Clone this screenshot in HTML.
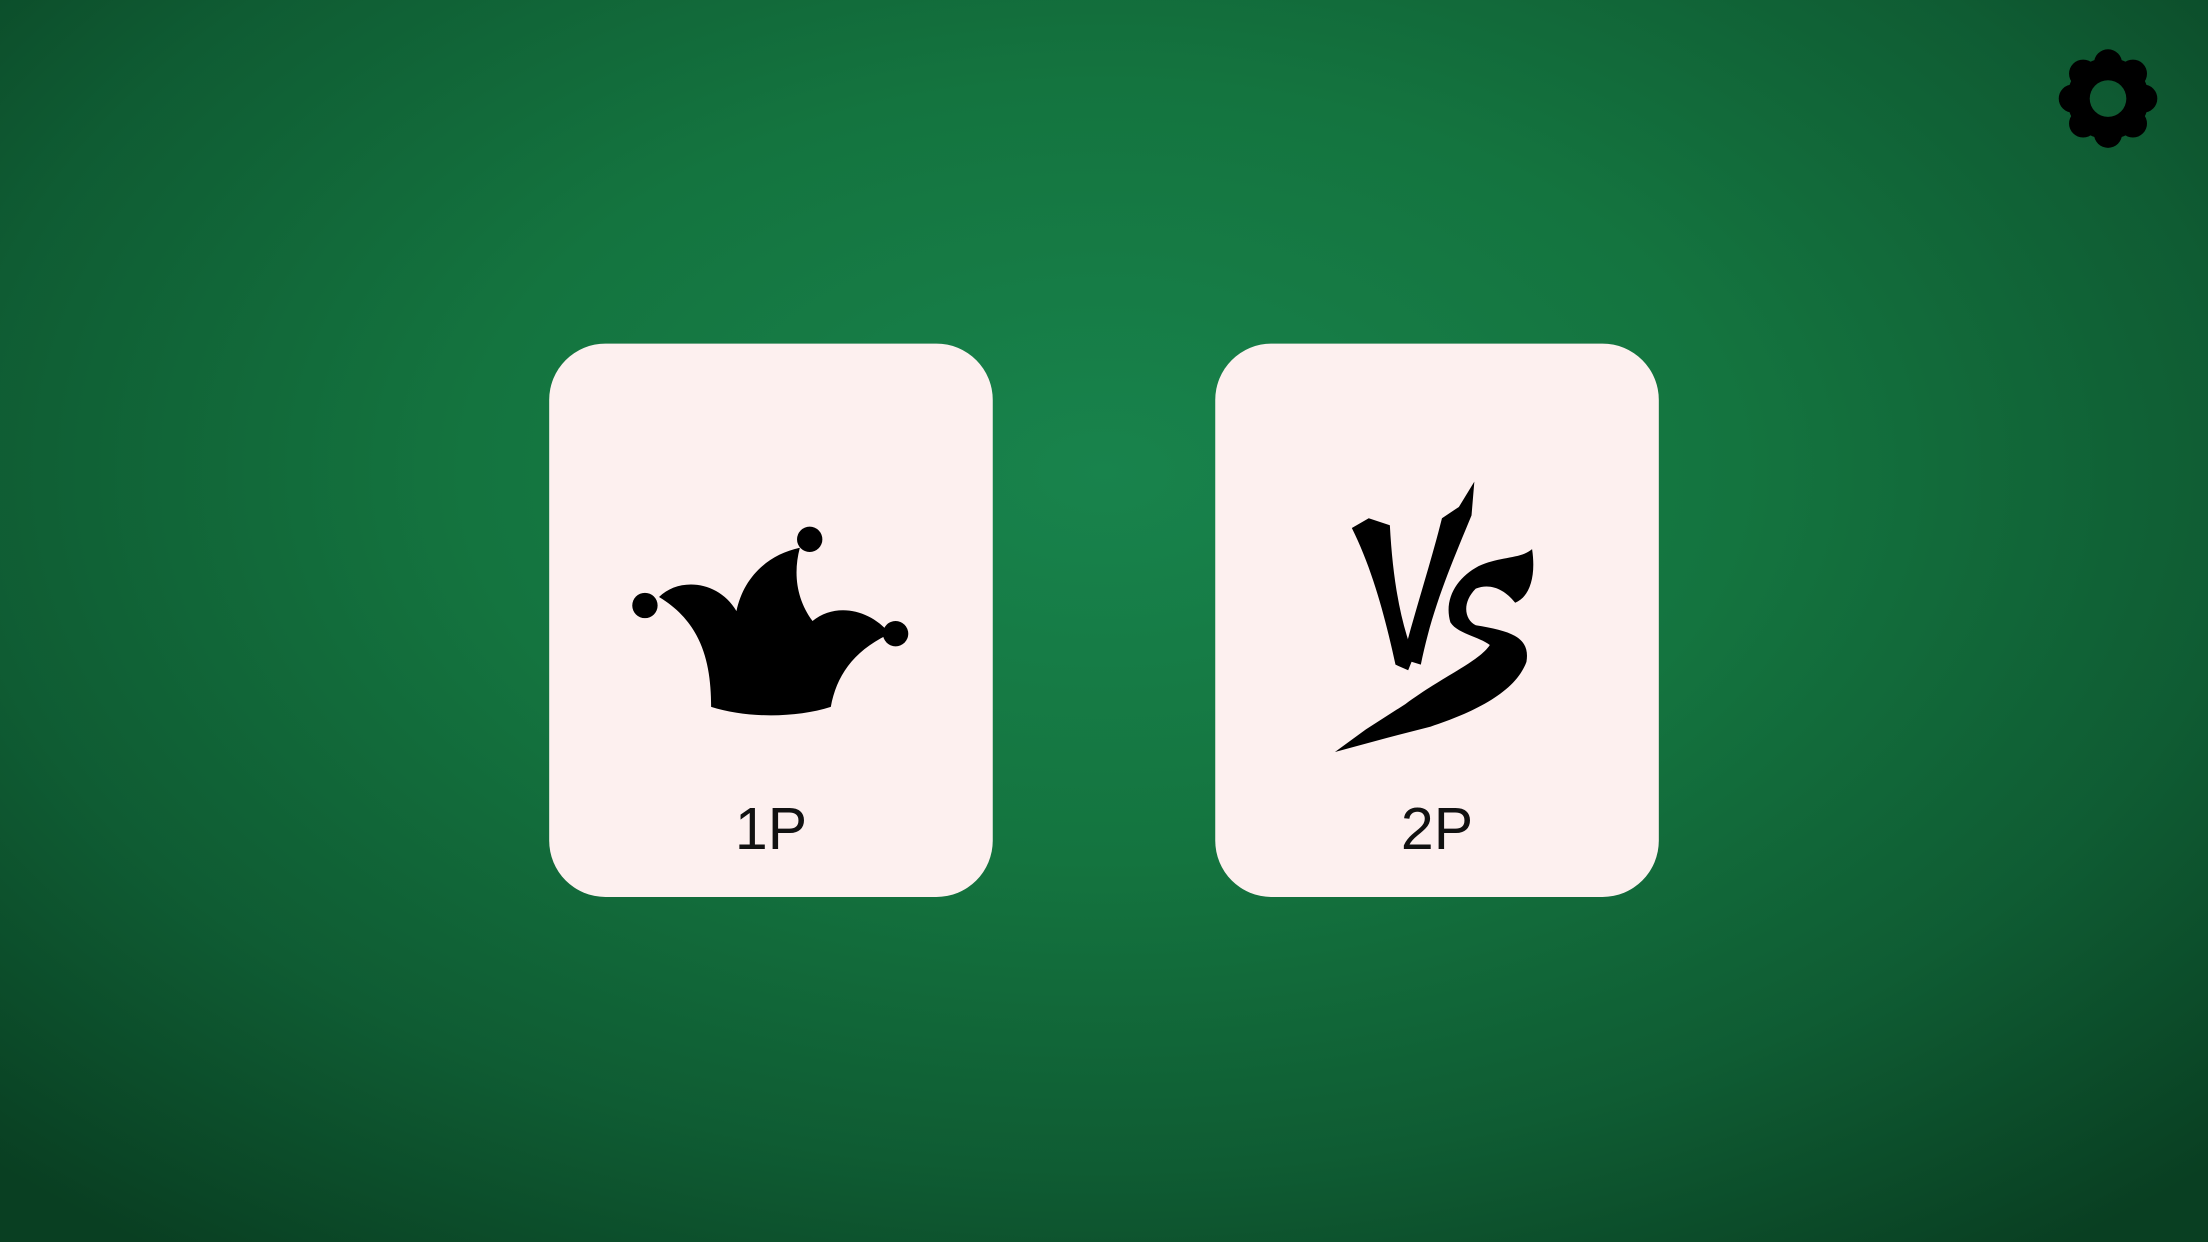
<!DOCTYPE html>
<html><head><meta charset="utf-8"><style>
html,body{margin:0;padding:0}
body{width:2208px;height:1242px;overflow:hidden;position:relative;
background:radial-gradient(ellipse 72% 78% at 50% 38%,#18834c 0%,#14743f 40%,#0f5c33 72%,#093f22 100%);
font-family:"Liberation Sans",sans-serif}
svg{position:absolute;left:0;top:0}
.lbl{position:absolute;top:794px;width:444px;text-align:center;font-size:59px;line-height:70px;color:#111;font-family:"Liberation Sans",Arial,sans-serif}
</style></head><body>
<svg width="2208" height="1242" viewBox="0 0 1568 882">
<defs>
<mask id="gm" maskUnits="userSpaceOnUse" x="1440" y="10" width="120" height="120"><rect x="1440" y="10" width="120" height="120" fill="#fff"/><circle cx="1497" cy="70" r="13" fill="#000"/></mask>
</defs>
<rect x="390" y="244" width="315" height="393" rx="40" fill="#fdf0ef"/>
<rect x="863" y="244" width="315" height="393" rx="40" fill="#fdf0ef"/>
<path fill="#000" d="M505,502 C505,470 498,442 468,424 C482,410 510,412 523,434 C528,410 545,394 568,389 C563,408 566,426 577,441 C593,428 617,432 632,450 C606,462 594,480 590,502 C565,510 530,510 505,502Z"/>
<circle cx="458" cy="430" r="9"/>
<circle cx="575" cy="383" r="9"/>
<circle cx="636" cy="450" r="9"/>
<path fill="#000" d="M960,375 L972,368 L987,373 C989,410 994,440 1004,466 L1000,476 L991,472 C984,440 975,405 960,375Z"/>
<path fill="#000" d="M996,468 C1006,430 1016,400 1024,368 L1036,360 L1047,342 L1045,366 C1031,400 1017,432 1009,472Z"/>
<path fill="#000" d="M1088,390 C1091,410 1086,424 1076,428 C1068,418 1058,414 1048,418 C1038,428 1040,440 1048,444 C1072,448 1087,452 1084,470 C1076,492 1046,506 1016,516 L985,524 L948,534 L970,518 L998,500 C1025,480 1050,470 1058,458 C1050,452 1035,450 1030,442 C1025,425 1035,410 1050,402 C1065,395 1080,397 1088,390Z"/>
<g mask="url(#gm)" fill="#000">
<circle cx="1497" cy="70" r="29"/>
<g id="t"><rect x="1487" y="35" width="20" height="22" rx="10"/></g>
<use href="#t" transform="rotate(45 1497 70)"/>
<use href="#t" transform="rotate(90 1497 70)"/>
<use href="#t" transform="rotate(135 1497 70)"/>
<use href="#t" transform="rotate(180 1497 70)"/>
<use href="#t" transform="rotate(225 1497 70)"/>
<use href="#t" transform="rotate(270 1497 70)"/>
<use href="#t" transform="rotate(315 1497 70)"/>
</g>
</svg>
<div class="lbl" style="left:549px">1P</div>
<div class="lbl" style="left:1215px">2P</div>
</body></html>
